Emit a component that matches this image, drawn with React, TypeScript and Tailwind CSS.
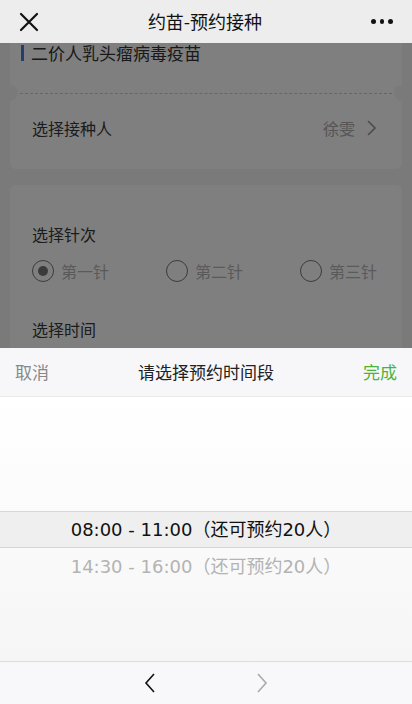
import React from 'react';

const cjk = "font-['Noto_Sans_CJK_SC',sans-serif]";

function Radio({ label, checked }: { label: string; checked?: boolean }) {
  return (
    <div className="flex items-center gap-[7px] whitespace-nowrap">
      <span className="w-[22px] h-[22px] rounded-full border-[1.5px] border-[#777] flex items-center justify-center">
        {checked && <span className="w-[10px] h-[10px] rounded-full bg-[#777]" />}
      </span>
      <span className="text-[16px] leading-[20px] text-[#b5b5b5]">{label}</span>
    </div>
  );
}

export default function App() {
  const slots = [
    { time: '08:00 - 11:00（还可预约20人）', active: true },
    { time: '14:30 - 16:00（还可预约20人）', active: false },
  ];

  return (
    <div className={`h-[704px] w-[412px] flex flex-col overflow-hidden ${cjk}`}>
      {/* Header */}
      <div className="h-[43px] bg-[#ededed] flex items-center justify-between px-[19px] shrink-0">
        <svg className="w-[20px] h-[20px]" viewBox="0 0 20 20" fill="none" stroke="#111" strokeWidth={2.2} strokeLinecap="round">
          <path d="M2 2l16 16M18 2L2 18" />
        </svg>
        <h1 className="text-[18px] text-[#111]">约苗-预约接种</h1>
        <div className="flex gap-[4px] w-[22px]">
          <span className="w-[5px] h-[5px] rounded-full bg-[#111]" />
          <span className="w-[5px] h-[5px] rounded-full bg-[#111]" />
          <span className="w-[5px] h-[5px] rounded-full bg-[#111]" />
        </div>
      </div>

      {/* Dimmed page behind the sheet */}
      <div className="relative flex-1 overflow-hidden bg-[#f4f4f4]">
        <div className="px-[10px]">
          {/* Vaccine card */}
          <div className="bg-white rounded-b-[6px] pb-[8px]">
            <div className="flex items-center h-[20px] pl-[11px]">
              <span className="w-[3px] h-[16px] bg-[#4a78e0] mr-[7px]" />
              <span className="text-[17px] leading-[20px] text-[#333]">二价人乳头瘤病毒疫苗</span>
            </div>
            <div className="relative mt-[30px] h-[1px] mx-[10px] border-t border-dashed border-[#ccc]">
              <span className="absolute -left-[18px] -top-[9px] w-[16px] h-[16px] rounded-full bg-[#f4f4f4]" />
              <span className="absolute -right-[18px] -top-[9px] w-[16px] h-[16px] rounded-full bg-[#f4f4f4]" />
            </div>
            <div className="h-[67px] flex items-center justify-between pl-[22px] pr-[26px]">
              <span className="text-[16px] text-[#383838]">选择接种人</span>
              <div className="flex items-center gap-[12px]">
                <span className="text-[16px] text-[#aaa]">徐雯</span>
                <svg className="w-[9px] h-[16px]" viewBox="0 0 9 16" fill="none" stroke="#999" strokeWidth={1.6}>
                  <path d="M1 1l7 7-7 7" />
                </svg>
              </div>
            </div>
          </div>

          {/* Dose / time card */}
          <div className="bg-white rounded-[6px] mt-[16px] pt-[39px] pb-[40px] pl-[22px] pr-[10px]">
            <div className="text-[16px] leading-[20px] text-[#383838]">选择针次</div>
            <div className="mt-[16px] flex items-center h-[22px]">
              <div className="w-[134px]"><Radio label="第一针" checked /></div>
              <div className="w-[134px]"><Radio label="第二针" /></div>
              <Radio label="第三针" />
            </div>
            <div className="mt-[37px] text-[16px] leading-[20px] text-[#383838]">选择时间</div>
          </div>
        </div>
        <div className="absolute inset-0 bg-black/50" />
      </div>

      {/* Picker sheet */}
      <div className="shrink-0 bg-white">
        <div className="h-[49px] bg-[#f7f7f9] border-b border-[#eaeaea] flex items-center justify-between px-[15px]">
          <button className="text-[17px] text-[#888]">取消</button>
          <span className="text-[17px] text-[#222]">请选择预约时间段</span>
          <button className="text-[17px] text-[#4cb338]">完成</button>
        </div>
        <div className="h-[264px] bg-gradient-to-b from-white to-[#f6f6f6] flex flex-col">
          <div className="h-[114px]" />
          {slots.map((s) => (
            <div
              key={s.time}
              className={`h-[37px] flex items-center justify-center font-['DejaVu_Sans','Noto_Sans_CJK_SC',sans-serif] text-[18px] ${
                s.active ? 'bg-[#efefef] border-y border-[#d6d6d6] text-[#111]' : 'text-[#b3b3b3]'
              }`}
            >
              {s.time}
            </div>
          ))}
        </div>
        <div className="h-[43px] bg-[#f8f8fa] border-t border-[#dcdcdc] flex items-center justify-center gap-[100px]">
          <svg className="w-[12px] h-[20px]" viewBox="0 0 12 20" fill="none" stroke="#111" strokeWidth={1.6}>
            <path d="M10 1L2 10l8 9" />
          </svg>
          <svg className="w-[12px] h-[20px]" viewBox="0 0 12 20" fill="none" stroke="#aaa" strokeWidth={1.6}>
            <path d="M2 1l8 9-8 9" />
          </svg>
        </div>
      </div>
    </div>
  );
}
